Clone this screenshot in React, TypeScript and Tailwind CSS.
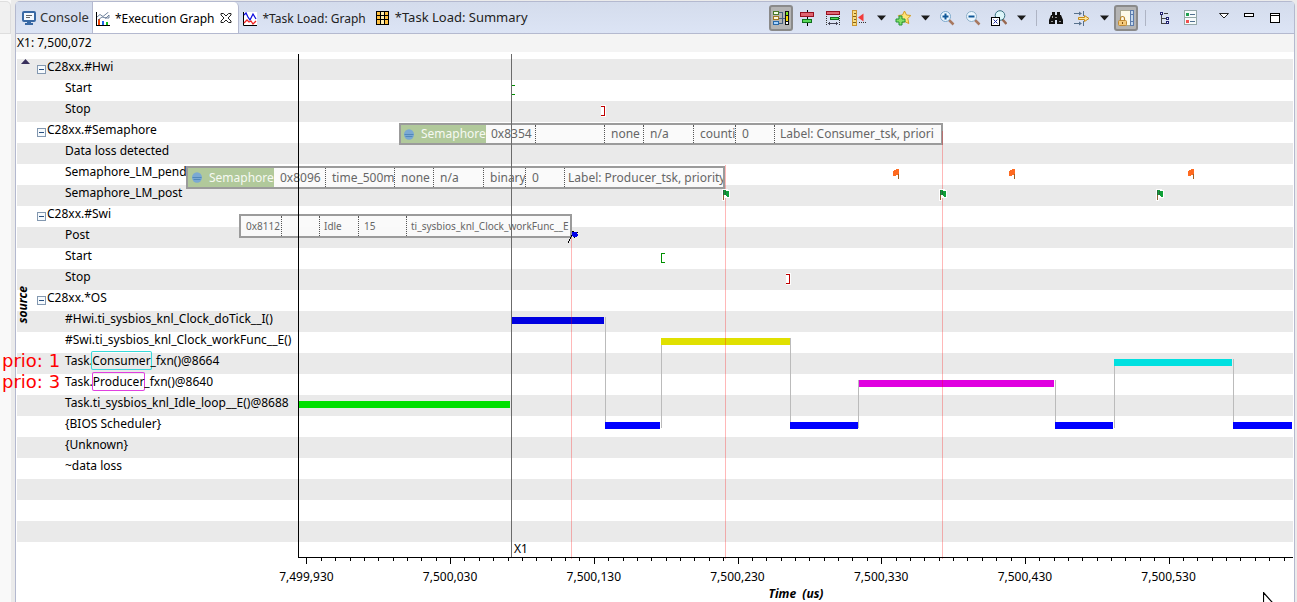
import type { ReactNode } from "react";

const PLOT_UNITS = 995;
const pct = (u: number) => `${(u / PLOT_UNITS) * 100}%`;

type Row = { label?: ReactNode; group?: boolean; name?: string; note?: string };

const rows: Row[] = [
  { label: "C28xx.#Hwi", group: true, name: "Hwi" },
  { label: "Start" },
  { label: "Stop" },
  { label: "C28xx.#Semaphore", group: true, name: "Semaphore" },
  { label: "Data loss detected" },
  { label: "Semaphore_LM_pend" },
  { label: "Semaphore_LM_post" },
  { label: "C28xx.#Swi", group: true, name: "Swi" },
  { label: "Post" },
  { label: "Start" },
  { label: "Stop" },
  { label: "C28xx.*OS", group: true, name: "OS" },
  { label: "#Hwi.ti_sysbios_knl_Clock_doTick__I()" },
  { label: "#Swi.ti_sysbios_knl_Clock_workFunc__E()" },
  {
    label: (
      <>
        Task.<span className="rounded-[1px] ring-1 ring-[#38dada]">Consumer</span>_fxn()@8664
      </>
    ),
    note: "prio: 1",
  },
  {
    label: (
      <>
        Task.<span className="rounded-[1px] ring-1 ring-[#e040e0]">Producer</span>_fxn()@8640
      </>
    ),
    note: "prio: 3",
  },
  { label: "Task.ti_sysbios_knl_Idle_loop__E()@8688" },
  { label: "{BIOS Scheduler}" },
  { label: "{Unknown}" },
  { label: "~data loss" },
  {},
  {},
  {},
];

const ROW_TOP = 7;
const ROW_H = 21;
const rowY = (i: number) => ROW_TOP + i * ROW_H;

const bars = [
  { row: 16, from: 1, to: 212, color: "#00e000" },
  { row: 12, from: 213, to: 306, color: "#0000e0" },
  { row: 17, from: 307, to: 362, color: "#0000ff" },
  { row: 13, from: 363, to: 492, color: "#e0e000" },
  { row: 17, from: 492, to: 560, color: "#0000ff" },
  { row: 15, from: 561, to: 756, color: "#e000e0" },
  { row: 17, from: 757, to: 815, color: "#0000ff" },
  { row: 14, from: 816, to: 934, color: "#00e0e0" },
  { row: 17, from: 935, to: 994, color: "#0000ff" },
];

const links = [
  { at: 307, from: 12 },
  { at: 363, from: 13 },
  { at: 492, from: 13 },
  { at: 560, from: 15 },
  { at: 757, from: 15 },
  { at: 816, from: 14 },
  { at: 935, from: 14 },
];

const majorLabels = ["7,499,930", "7,500,030", "7,500,130", "7,500,230", "7,500,330", "7,500,430", "7,500,530"];
const TICK = 14.37;
const ticks = Array.from({ length: 69 }, (_, i) => i);

function Marker({ at, y, children }: { at: number; y: number; children: ReactNode }) {
  return (
    <svg x={pct(at)} y={y} width="12" height="14" overflow="visible">
      {children}
    </svg>
  );
}

const OpenBracket = () => (
  <>
    <path d="M0 0h5v12h-5z" fill="#fff" />
    <path d="M0 1h4v1H1v8h3v1H0z" fill="#009000" />
  </>
);
const CloseBracket = () => (
  <>
    <path d="M0 0h5v12h-5z" fill="#fff" />
    <path d="M0 1h4v10H0v-1h3V2H0z" fill="#c00000" />
  </>
);
const PendFlag = () => (
  <>
    <path d="M0 2h1V1h2V0h3v6H3v1H0z" fill="#ff6a20" />
    <path d="M5 5h1v5H5z" fill="#a06020" />
  </>
);
const PostFlag = () => (
  <>
    <path d="M-1-1h6v1h2v8h-5v3h-3z" fill="#fff" />
    <path d="M0 0h3v1h3v6H4V6H3V5H1v1H0z" fill="#10a038" />
    <path d="M0 0h1v6H0zM2 1h1v4H2z" fill="#28683a" />
    <path d="M0 5h1v5H0z" fill="#906030" />
  </>
);

function Plot() {
  return (
    <svg className="absolute inset-0 h-full w-full overflow-visible" shapeRendering="crispEdges" aria-label="Execution graph">
      {links.map((l) => (
        <rect key={l.at} x={pct(l.at)} y={rowY(l.from) + 6} width="1" height={rowY(17) + 12 - rowY(l.from) - 6} fill="#bbbbbb" />
      ))}
      {bars.map((b) => (
        <rect key={b.from} x={pct(b.from)} y={rowY(b.row) + 6} width={pct(b.to - b.from)} height="7" fill={b.color} />
      ))}

      <rect x={pct(273)} y="186" width="1" height="321" fill="#ff0000" fillOpacity="0.28" />
      <rect x={pct(427)} y="113" width="1" height="394" fill="#ff0000" fillOpacity="0.28" />
      <rect x={pct(644)} y="79" width="1" height="428" fill="#ff0000" fillOpacity="0.28" />

      <Marker at={213} y={32}><OpenBracket /></Marker>
      <Marker at={303} y={53}><CloseBracket /></Marker>
      <Marker at={363} y={200}><OpenBracket /></Marker>
      <Marker at={488} y={221}><CloseBracket /></Marker>
      {[595, 711, 890].map((x) => (
        <Marker key={x} at={x} y={117}><PendFlag /></Marker>
      ))}
      {[425, 642, 859].map((x) => (
        <Marker key={x} at={x} y={138}><PostFlag /></Marker>
      ))}
      <Marker at={270} y={178}>
        <path d="M0 13h1v-2h1V9h1V7h1V5H3v2H2v2H1v2H0z" fill="#000" />
        <path d="M4 1h2v1h3v2h1v2H9v1H7v1H6V7H5V6H4z" fill="#0000e8" />
        <path d="M4 1h2v1H4zM9 2h1v1H9zM6 7h1v1H6z" fill="#000" />
      </Marker>

      <rect x={pct(213)} y="2" width="1" height="504" fill="#6b6b6b" />
      <rect x="0" y="2" width="1" height="504" fill="#000" />
      <rect x="1" y="505" width={pct(994)} height="1" fill="#000" />
      {ticks.map((i) => (
        <rect key={i} x={pct(8.4 + i * TICK)} y="505" width="1" height={i % 10 === 0 ? 7 : 4} fill="#000" />
      ))}
      {majorLabels.map((t, i) => (
        <text key={t} x={pct(8.4 + i * TICK * 10)} y="529" textAnchor="middle" className="fill-black text-[12px]">
          {t}
        </text>
      ))}
      <text x={pct(216)} y="501" className="fill-black text-[12px]">X1</text>
      <text x={pct(498)} y="546" textAnchor="middle" className="fill-black text-[12px] font-bold italic whitespace-pre">
        {"Time  (us)"}
      </text>
      <svg x={pct(965)} y="540" width="14" height="10">
        <path d="M0.5 0.5V17l4-4 4 1h4z" fill="#fff" stroke="#000" strokeWidth="1.200" shapeRendering="auto" />
      </svg>
    </svg>
  );
}

function Semaphore({ size }: { size: string }) {
  return (
    <div className={`flex shrink-0 items-center gap-[7px] overflow-hidden bg-[#b1c99b] text-[#f6f9f2] ${size}`}>
      <svg width="10" height="11" viewBox="0 0 10 11" className="shrink-0">
        <ellipse cx="5" cy="5.5" rx="5" ry="5.200" fill="#7ba9d3" />
        <path d="M0.500 5.500h9M1.500 7.500h7" stroke="#5288bb" />
      </svg>
      <span>Semaphore</span>
    </div>
  );
}

function Cell({ w, last, children }: { w: string; last?: boolean; children?: ReactNode }) {
  return (
    <div className={`flex items-center overflow-hidden whitespace-nowrap ${w} ${last ? "" : "shrink-0 border-r border-dotted border-[#555]"}`}>
      {children}
    </div>
  );
}

const tip = "absolute flex border-2 border-[#9b9b9b] bg-[#fafafa]/95 text-[#666]";

function Records() {
  return (
    <>
      <div className={`${tip} top-[71px] h-[22px] w-[544px] text-[12px]`} style={{ right: pct(350) }}>
        <Semaphore size="w-[85px] pl-[3px]" />
        <Cell w="w-[50px] pl-[5px]">0x8354</Cell>
        <Cell w="w-[69px]" />
        <Cell w="w-[39px] pl-1.5">none</Cell>
        <Cell w="w-[50px] pl-1.5">n/a</Cell>
        <Cell w="w-[42px] pl-1.5">counti</Cell>
        <Cell w="w-[39px] pl-1.5">0</Cell>
        <Cell w="flex-1 pl-[5px]" last>Label: Consumer_tsk, priori</Cell>
      </div>
      <div className={`${tip} top-[114px] h-[23px] w-[539px] text-[12px] leading-5`} style={{ right: pct(568) }}>
        <Semaphore size="w-[86px] pl-1" />
        <Cell w="w-[52px] pl-1.5">0x8096</Cell>
        <Cell w="w-[69px] pl-1.5">time_500m</Cell>
        <Cell w="w-[39px] pl-1.5">none</Cell>
        <Cell w="w-[50px] pl-1.5">n/a</Cell>
        <Cell w="w-[42px] pl-1.5">binary</Cell>
        <Cell w="w-[39px] pl-1.5">0</Cell>
        <Cell w="flex-1 pl-[3px]" last>Label: Producer_tsk, priority</Cell>
      </div>
      <div className={`${tip} top-[162px] h-6 w-[333px] text-[10px]`} style={{ right: pct(721) }}>
        <Cell w="w-[41px] pl-[5px]">0x8112</Cell>
        <Cell w="w-[38px]" />
        <Cell w="w-[39px] pl-1">Idle</Cell>
        <Cell w="w-[48px] pl-[5px]">15</Cell>
        <Cell w="flex-1 pl-1" last>ti_sysbios_knl_Clock_workFunc__E</Cell>
      </div>
    </>
  );
}

function Icon({ children, size = 16 }: { children: ReactNode; size?: number }) {
  return (
    <svg width={size} height={size} viewBox={`0 0 ${size} ${size}`} aria-hidden="true" className="shrink-0">
      {children}
    </svg>
  );
}

function Tool({ label, pressed, children }: { label: string; pressed?: boolean; children: ReactNode }) {
  return (
    <button
      type="button"
      aria-label={label}
      aria-pressed={pressed}
      className={`flex h-[26px] w-6 shrink-0 items-center justify-center rounded-[3px] border-2 mx-px ${
        pressed ? "border-[#8a8a8a] bg-[#b4b4b4]" : "border-transparent"
      }`}
    >
      {children}
    </button>
  );
}

function Drop({ label }: { label: string }) {
  return (
    <button type="button" aria-label={label} className="flex h-[26px] w-[18px] shrink-0 items-center justify-center">
      <svg width="9" height="6" viewBox="0 0 9 6" aria-hidden="true">
        <path d="M0 0.5h9L4.500 5.500z" fill="#1b1b1b" />
      </svg>
    </button>
  );
}

const Sep = () => <span className="mx-1.5 h-4 w-px shrink-0 bg-[#aeb4c4]" />;

function Toolbar() {
  return (
    <div role="toolbar" aria-label="Graph tools" className="flex shrink-0 items-center pt-px pr-[5px]">
      <Tool label="Show tree" pressed>
        <Icon>
          <g shapeRendering="crispEdges">
            <path d="M5 2.500h4v11H5M5 8h7" fill="none" stroke="#48607c" />
            <rect x="0.5" y="1.500" width="5" height="3" fill="#f6ffe8" stroke="#4a7a28" />
            <rect x="0.5" y="6.500" width="5" height="3" fill="#fff8dc" stroke="#a07820" />
            <rect x="0.5" y="11.500" width="5" height="3" fill="#a8d4ff" stroke="#2868a8" />
            <path d="M12 1h4v14h-4z" fill="#111" />
            <path d="M13 2h2v3h-2z" fill="#7ee81e" />
            <path d="M13 6h2v5h-2z" fill="#f8d800" />
            <path d="M13 12h2v2h-2z" fill="#fff" />
          </g>
        </Icon>
      </Tool>
      <Tool label="Align center">
        <Icon>
          <g shapeRendering="crispEdges">
            <path d="M8 0h1v16H8z" fill="#000" />
            <rect x="1.500" y="2.500" width="13" height="4" fill="#e06470" stroke="#981020" />
            <rect x="3.500" y="9.500" width="9" height="3" fill="#58d858" stroke="#10701c" />
          </g>
        </Icon>
      </Tool>
      <Tool label="Measure range">
        <Icon>
          <g shapeRendering="crispEdges">
            <rect x="1.500" y="1.500" width="13" height="3" fill="#e06470" stroke="#981020" />
            <rect x="5.500" y="7.500" width="8" height="2" fill="#58d858" stroke="#10701c" />
            <path d="M1.500 6v10M14.500 6v10" stroke="#333" strokeDasharray="1 1" />
            <path d="M3 13.500h10M4.500 12v3M11.500 12v3" stroke="#445" />
          </g>
        </Icon>
      </Tool>
      <Tool label="Measurement marker">
        <Icon>
          <rect x="1.500" y="0.500" width="4" height="15" fill="#f8dc80" stroke="#c89430" />
          <path d="M3 3.500h2M2 6.500h3M3 9.500h2M2 12.500h3" stroke="#80601c" />
          <path d="M7 7.500L12.500 3.500v8z" fill="#f23b3b" />
          <path d="M8 12.500h8" stroke="#333" strokeDasharray="1 1" />
        </Icon>
      </Tool>
      <Drop label="Measurement options" />
      <Tool label="New bookmark">
        <Icon>
          <path d="M9.500 1l2 4 4.300.5-3 3 1 5-4.300-2-4 2 .8-4.800-3-3.200 4.200-.5z" fill="#ffe47a" stroke="#d59c22" />
          <path d="M4 6h3v3h3v3H7v3H4v-3H1V9h3z" fill="#86e065" stroke="#22943a" />
        </Icon>
      </Tool>
      <Drop label="Bookmark options" />
      <Tool label="Zoom in">
        <Icon>
          <path d="M10 10l4.500 4.500" stroke="#a87860" strokeWidth="2.500" />
          <circle cx="6.500" cy="6.500" r="5" fill="#edf7ff" stroke="#7aa8cc" />
          <path d="M3.500 6.500h6M6.500 3.500v6" stroke="#105898" strokeWidth="2" />
        </Icon>
      </Tool>
      <Tool label="Zoom out">
        <Icon>
          <path d="M10 10l4.500 4.500" stroke="#a87860" strokeWidth="2.500" />
          <circle cx="6.500" cy="6.500" r="5" fill="#edf7ff" stroke="#8cafc8" />
          <path d="M3.500 6.500h6" stroke="#105898" strokeWidth="2" />
        </Icon>
      </Tool>
      <Tool label="Zoom to fit">
        <Icon>
          <path d="M11.500 9.500l4 4.500" stroke="#986850" strokeWidth="2.500" />
          <circle cx="9" cy="5.500" r="4.800" fill="#dcf5f8" stroke="#387080" />
          <rect x="0.500" y="7.500" width="8" height="8" fill="#fff" stroke="#000" />
          <path d="M2.500 9.500l4 4M6.500 9.500l-4 4" stroke="#2030a0" />
        </Icon>
      </Tool>
      <Drop label="Zoom options" />
      <Sep />
      <Tool label="Find">
        <Icon>
          <path d="M4 2h3v3h2V2h3v3h1l2 5v4H9v-4H7v4H1v-4l2-5h1z" fill="#111" />
          <path d="M3 11.500h2M11 11.500h2M7 7.500h2M4.500 6v2" stroke="#999" />
        </Icon>
      </Tool>
      <Tool label="Filter">
        <Icon>
          <path d="M0 3.500h6M0 13.500h6M9.500 1v5M9.500 11v5" stroke="#58718c" />
          <path d="M5 1.500l3 2-3 2zM5 11.500l3 2-3 2z" fill="#58718c" />
          <path d="M4.500 7.500h6V5.500l4.500 3-4.500 3V9.500h-6z" fill="#ffe69a" stroke="#c58a18" />
        </Icon>
      </Tool>
      <Drop label="Filter options" />
      <Tool label="Scroll lock" pressed>
        <Icon>
          <rect x="2.500" y="0.500" width="13" height="15" fill="#fdfbe8" stroke="#a8a890" />
          <rect x="12.500" y="0.500" width="3" height="15" fill="#c4d8ee" stroke="#5c7cac" />
          <path d="M13 4.500h2M13 11.500h2" stroke="#5c7cac" />
          <path d="M2.500 10V8.500a2 2 0 0 1 4 0V10" fill="none" stroke="#b88428" strokeWidth="1.200" />
          <rect x="0.500" y="10.500" width="8" height="5" rx="1" fill="#f5ca7a" stroke="#c08a35" />
          <path d="M4.500 12v2" stroke="#805010" />
        </Icon>
      </Tool>
      <Sep />
      <Tool label="Tree view">
        <Icon>
          <g shapeRendering="crispEdges" fill="none">
            <path d="M4.500 5v8.500H9M5 8.500h4M7 3.500h4" stroke="#444" />
            <rect x="3.500" y="2.500" width="2" height="2" fill="#fff" stroke="#202070" />
            <rect x="9.500" y="7.500" width="2" height="2" fill="#fff" stroke="#202070" />
            <rect x="9.500" y="11.500" width="2" height="2" fill="#fff" stroke="#202070" />
          </g>
        </Icon>
      </Tool>
      <Tool label="Legend">
        <Icon>
          <g shapeRendering="crispEdges">
            <rect x="1.500" y="0.500" width="12" height="14" fill="#f6fbfb" stroke="#94a8a8" />
            <path d="M2 7.500h11" stroke="#94a8a8" />
            <path d="M7 4.500h5M7 11.500h5" stroke="#507090" />
            <path d="M3 3h3v3H3z" fill="#20a050" />
            <path d="M3 10h3v3H3z" fill="#f05050" />
          </g>
        </Icon>
      </Tool>
      <span className="w-[7px]" />
      <Tool label="View menu">
        <Icon>
          <path d="M3.500 3.500h9L8 8z" fill="#fff" stroke="#222" />
        </Icon>
      </Tool>
      <Tool label="Minimize">
        <Icon>
          <rect x="2.500" y="3.500" width="9" height="3" fill="#fff" stroke="#000" />
        </Icon>
      </Tool>
      <Tool label="Maximize">
        <Icon>
          <rect x="2.500" y="3.500" width="9" height="9" fill="#fff" stroke="#000" />
          <path d="M2 5.500h10" stroke="#000" />
        </Icon>
      </Tool>
    </div>
  );
}

function Tabs() {
  return (
    <div role="tablist" aria-label="Views" className="flex items-stretch text-[13px] whitespace-nowrap text-[#222]">
      <button type="button" role="tab" className="flex items-center gap-1 pr-[3px] pl-1.5 text-[#333]">
        <Icon size={14}>
          <rect x="1" y="1" width="12" height="9" rx="1" fill="#f4f9ff" stroke="#3868a4" strokeWidth="2" />
          <path d="M4 4.500h6M4 6.500h4" stroke="#666" />
          <path d="M5 11h4v1h2v2H3v-2h2z" fill="#3868a4" />
        </Icon>
        Console
      </button>
      <div className="flex items-center rounded-tr-[5px] border-x border-[#b4b9cf] bg-white pr-1.5 pl-[3px]">
        <button type="button" role="tab" aria-selected="true" className="flex h-full items-center gap-[5px] pt-0.5 text-[12px] text-black">
          <Icon size={14}>
            <g shapeRendering="crispEdges">
              <path d="M0.500 0v13.500H14" fill="none" stroke="#000" />
              <path d="M2 7h2v6H2z" fill="#f04000" />
              <path d="M6 9h2v4H6z" fill="#2068e8" />
              <path d="M10 10h2v3h-2z" fill="#10c020" />
            </g>
            <path d="M1 5l3-2.500 3 2L12.500 0M2 8l4-3 4 1 3-3v3H9" fill="none" stroke="#506888" strokeWidth="0.8" />
          </Icon>
          *Execution Graph
        </button>
        <button type="button" aria-label="Close" className="ml-1.5">
          <Icon size={12}>
            <path d="M1 1.500h2.500L6 4l2.500-2.500H11V3L8 6l3 3v1.500H8.500L6 8l-2.500 2.500H1V9l3-3-3-3z" fill="#fff" stroke="#222" />
          </Icon>
        </button>
      </div>
      <button type="button" role="tab" className="flex items-center gap-[5px] pt-0.5 pl-1 text-[12px]">
        <Icon size={14}>
          <path d="M0 0h14v14H0z" fill="#fff" />
          <path d="M0.500 0v13.500H14" fill="none" stroke="#000" />
          <path d="M1 3l2-2 2 4 2 3 3-6 3 5" fill="none" stroke="#1010e0" strokeWidth="1.300" />
          <path d="M1 11l3-3 2 2 2-1 2 3 3-3" fill="none" stroke="#f02020" strokeWidth="1.300" />
        </Icon>
        *Task Load: Graph
      </button>
      <button type="button" role="tab" className="ml-2.5 flex items-center gap-[5px]">
        <Icon size={14}>
          <g shapeRendering="crispEdges">
            <path d="M0 0h13v14H0z" fill="#000" />
            <path d="M1 1h3v3H1zM1 5h3v3H1zM1 9h3v4H1zM9 1h3v3H9zM9 5h3v3H9zM9 9h3v4H9z" fill="#ffc040" />
            <path d="M5 1h3v3H5zM5 5h3v3H5zM5 9h3v4H5z" fill="#ffeeb0" />
          </g>
        </Icon>
        *Task Load: Summary
      </button>
    </div>
  );
}

function Expander({ name }: { name?: string }) {
  return (
    <button type="button" aria-label={`Collapse ${name}`} aria-expanded="true" className="mt-1.5 mr-px flex size-[9px] shrink-0 items-center justify-center border border-[#8398b0] bg-[#f6fafd]">
      <span className="h-px w-[5px] bg-[#274f80]" />
    </button>
  );
}

export default function App() {
  return (
    <div className="flex min-h-screen overflow-x-hidden bg-[#ebebeb] font-['Noto_Sans',sans-serif] text-black">
      <aside className="flex w-[11px] shrink-0 flex-col bg-[#f9f9f9]">
        <div className="mt-px h-[33px] rounded-tr-[5px] border-t border-r border-b border-[#dedede] bg-[#f0f0f0]" />
      </aside>
      <main className="mt-px mr-0.5 ml-1 flex min-w-0 flex-1 flex-col rounded-t-[5px] border border-b-0 border-[#b4b9cf] bg-white">
        <header className="flex h-8 shrink-0 justify-between border-b border-[#b4b9cf] bg-linear-to-b from-[#d4dcec] to-[#dce4f5]">
          <Tabs />
          <Toolbar />
        </header>
        <div className="h-[18px] shrink-0 bg-[#f4f4f4] pl-px text-[12px] leading-[18px]">X1: 7,500,072</div>
        <section className="relative mx-px h-[550px] pt-[7px]">
          <ul>
            {rows.map((r, i) => (
              <li key={i} className="relative flex h-[21px] items-start text-[12px] leading-4 whitespace-nowrap odd:bg-[#eaeaea]">
                {r.note && (
                  <span className="absolute -left-[15px] font-['DejaVu_Sans',sans-serif] text-[18px] leading-4 text-[#ff0000]">{r.note}</span>
                )}
                {r.group ? (
                  <div className="flex pl-5">
                    <Expander name={r.name} />
                    <span>{r.label}</span>
                  </div>
                ) : (
                  <span className="pl-12">{r.label}</span>
                )}
              </li>
            ))}
          </ul>
          <svg width="9" height="5" viewBox="0 0 9 5" className="absolute top-[7px] left-[4px]" aria-hidden="true">
            <path d="M0 5L4.500 0 9 5z" fill="#38305c" />
          </svg>
          <div className="absolute top-[234px] -left-0.5 rotate-180 text-[12px] leading-4 font-bold italic [writing-mode:vertical-rl]">source</div>
          <div className="absolute inset-y-0 right-0 left-[281px]">
            <Records />
            <Plot />
          </div>
        </section>
      </main>
    </div>
  );
}
